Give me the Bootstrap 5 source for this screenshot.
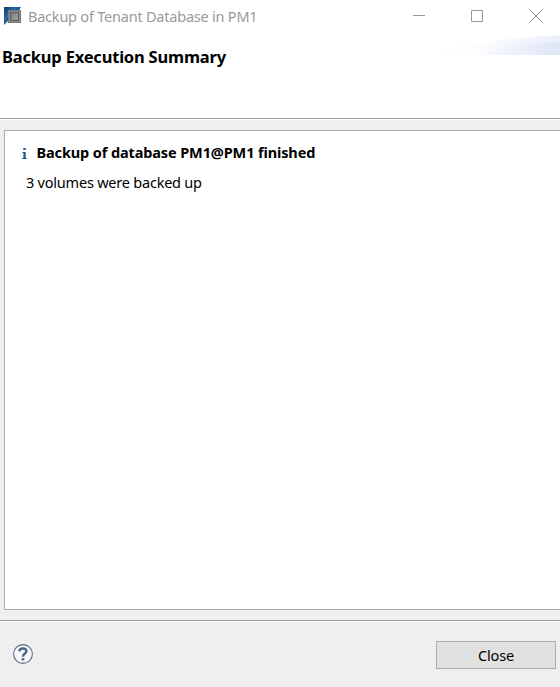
<!DOCTYPE html>
<html lang="en">
<head>
<meta charset="utf-8">
<meta name="viewport" content="width=device-width, initial-scale=1">
<title>Backup of Tenant Database in PM1</title>
<link href="https://cdn.jsdelivr.net/npm/bootstrap@5.3.0/dist/css/bootstrap.min.css" rel="stylesheet">
<style>
body{font-family:"Noto Sans","Open Sans",sans-serif;font-size:14.5px;line-height:20px;color:#000;background:#efefef}
.window{width:560px;height:687px}
.titlebar{height:35px;padding-left:4px}
.titlebar h1{font-size:14.5px;line-height:20px;font-weight:400;color:#999;margin:-3px 0 0 6px;letter-spacing:-.22px}
.titlebar .app-icon{margin-top:-1px}
.controls{gap:45px;padding:0 17px 3px 0}
.controls button{width:14px;height:14px}
.header{height:84px;border-bottom:1px solid #a0a0a0}
.header h2{font-size:16.5px;line-height:24px;font-weight:700;margin:10px 0 0 2px;letter-spacing:-.2px}
.content{height:501px;padding:10px 0 10px 4px;border-top:1px solid #fff}
.panel{border:1px solid #abadb3;border-right:0;height:480px;padding:11px 0 0 17px}
.panel svg{margin-top:2px}
.panel h3{font-size:14.5px;line-height:20px;font-weight:700;letter-spacing:-.12px;margin-left:9.5px}
.volumes{margin:10px 0 0 4px;letter-spacing:-.22px}
.footer-bar{height:67px;border-top:1px solid #a0a0a0;box-shadow:inset 0 1px #fff;padding:20px 4px 0 12px}
.help{margin-top:3px}
.btn-close-dialog{width:120px;height:28px;background:#e1e1e1;border:1px solid #adadad;border-radius:0;color:#000;font-size:14.5px;line-height:20px;padding:3px 0;letter-spacing:-.15px}
</style>
<script src="https://cdn.jsdelivr.net/npm/bootstrap@5.3.0/dist/js/bootstrap.bundle.min.js"></script>
</head>
<body class="overflow-hidden">
<main class="window d-flex flex-column">
<div class="titlebar bg-white d-flex align-items-center flex-shrink-0">
<svg class="app-icon" width="18" height="20" viewBox="0 0 18 20" aria-hidden="true">
<defs><linearGradient id="blue" x2="1" y2="1"><stop stop-color="#123e70"/><stop offset=".35" stop-color="#2a649f"/><stop offset="1" stop-color="#123558"/></linearGradient><linearGradient id="chip" x2="1" y2="1"><stop stop-color="#747474"/><stop offset="1" stop-color="#a8a8a8"/></linearGradient></defs>
<path d="M0 0H17L14 5H4V14L0 18Z" fill="url(#blue)"/><rect x="4.5" y="3.5" width="12" height="12" fill="#8e8e8e" stroke="#777"/><rect x="6.5" y="5.5" width="8" height="8" fill="url(#chip)" stroke="#5c5c5c"/></svg>
<h1>Backup of Tenant Database in PM1</h1>
<div class="controls d-flex ms-auto">
<button class="btn p-0 border-0 d-flex" aria-label="Minimize"><svg width="14" height="14"><path d="M2 6.5H14" stroke="#999"/></svg></button>
<button class="btn p-0 border-0 d-flex" aria-label="Maximize"><svg width="14" height="14"><path d="M1.5 1.5H12.5V12.5H1.5Z" fill="none" stroke="#999"/></svg></button>
<button class="btn p-0 border-0 d-flex" aria-label="Close window"><svg width="14" height="14"><path d="M1 1L13 13M13 1L1 13" stroke="#888"/></svg></button>
</div>
</div>
<header class="header bg-white d-flex justify-content-between align-items-start flex-shrink-0">
<h2>Backup Execution Summary</h2>
<svg width="134" height="20" viewBox="0 0 134 20" aria-hidden="true"><defs><linearGradient id="swoosh" gradientUnits="userSpaceOnUse" x1="0" y1="0" x2="134" y2="0"><stop stop-color="#fff"/><stop offset=".4" stop-color="#f8fafe"/><stop offset="1" stop-color="#dce4f6"/></linearGradient></defs><path d="M0 20C35 9 85 2 134 0V20Z" fill="url(#swoosh)" opacity=".45"/><path d="M40 20C70 9 100 4 134 1V20Z" fill="url(#swoosh)" opacity=".3"/><path d="M50 20C80 11 106 8 134 7V20Z" fill="url(#swoosh)" opacity=".8"/></svg>
</header>
<section class="content flex-shrink-0">
<div class="panel bg-white">
<div class="d-flex align-items-center">
<svg width="5" height="11" viewBox="0 0 5 11" aria-hidden="true"><path d="M1.3 0H3.7V2H1.3ZM.3 4H3.7V10L5 10.3V11H0V10.3L1.4 10V5L.3 4.7Z" fill="#1c5a96"/></svg>
<h3 class="mb-0">Backup of database PM1@PM1 finished</h3>
</div>
<p class="volumes mb-0">3 volumes were backed up</p>
</div>
</section>
<footer class="footer-bar d-flex justify-content-between align-items-start flex-shrink-0">
<button class="btn p-0 border-0 d-flex help" aria-label="Help"><svg width="22" height="22" viewBox="0 0 22 22"><circle cx="11" cy="10" r="9.4" fill="#f8f9fb" stroke="#596b8b" stroke-width="1.1"/><path d="M7.4 7.4C7.5 3.5 14.4 3.4 14.4 7.1C14.4 9.7 11 9.5 11 12.8" fill="none" stroke="#50658c" stroke-width="2.5"/><rect x="9.7" y="14.1" width="2.7" height="2.4" fill="#50658c"/></svg></button>
<button class="btn btn-close-dialog">Close</button>
</footer>
</main>
</body>
</html>
